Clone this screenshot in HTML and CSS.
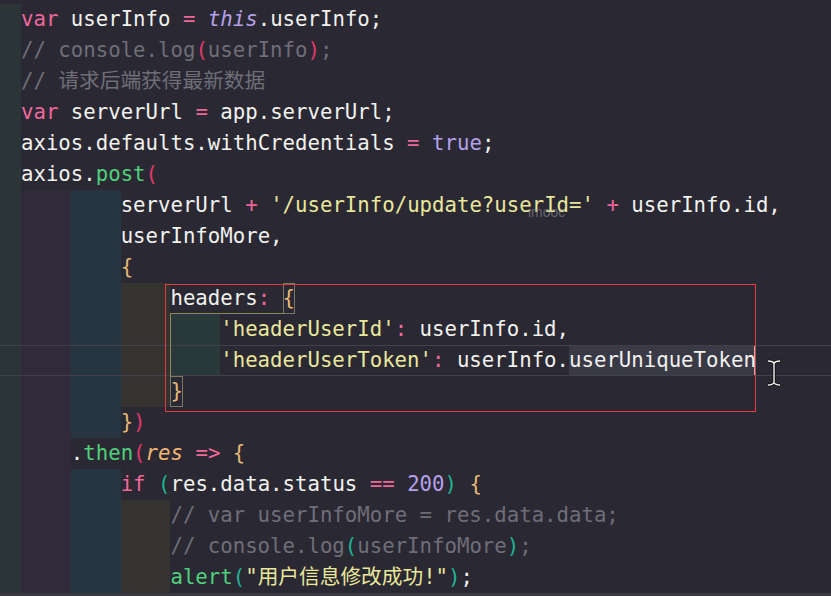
FILE: index.html
```html
<!DOCTYPE html>
<html lang="en">
<head>
  <meta charset="UTF-8">
  <title>userInfo update</title>
  <link rel="stylesheet" href="styles.css">
</head>
<body>

<div class="editor">
  <div class="line"><span class="lead"></span><span class="t"><span class="k">var</span> userInfo <span class="o">=</span> <span class="this">this</span>.userInfo;</span></div>
  <div class="line"><span class="lead"></span><span class="t"><span class="c">// console.log<span class="pr">(</span>userInfo<span class="pr">)</span>;</span></span></div>
  <div class="line"><span class="lead"></span><span class="t"><span class="c">// 请求后端获得最新数据</span></span></div>
  <div class="line"><span class="lead"></span><span class="t"><span class="k">var</span> serverUrl <span class="o">=</span> app.serverUrl;</span></div>
  <div class="line"><span class="lead"></span><span class="t">axios.defaults.withCredentials <span class="o">=</span> <span class="n">true</span>;</span></div>
  <div class="line"><span class="lead"></span><span class="t">axios.<span class="f">post</span><span class="pr">(</span></span></div>
  <div class="line"><span class="lead"></span><span class="g g1"></span><span class="g g2"></span><span class="t">serverUrl <span class="o">+</span> <span class="s">'/userInfo/update?userId='</span> <span class="o">+</span> userInfo.id,</span></div>
  <div class="line"><span class="lead"></span><span class="g g1"></span><span class="g g2"></span><span class="t">userInfoMore,</span></div>
  <div class="line"><span class="lead"></span><span class="g g1"></span><span class="g g2"></span><span class="t"><span class="br">{</span></span></div>
  <div class="line"><span class="lead"></span><span class="g g1"></span><span class="g g2"></span><span class="g g3"></span><span class="t">headers<span class="o">:</span> <span class="bx br">{</span></span></div>
  <div class="line"><span class="lead"></span><span class="g g1"></span><span class="g g2"></span><span class="g g3"></span><span class="g g4"></span><span class="t"><span class="s">'headerUserId'</span><span class="o">:</span> userInfo.id,</span></div>
  <div class="line cur"><span class="lead"></span><span class="g g1"></span><span class="g g2"></span><span class="g g3"></span><span class="g g4"></span><span class="t"><span class="s">'headerUserToken'</span><span class="o">:</span> userInfo.<span class="sel">userUniqueToken</span><span class="caret"></span></span></div>
  <div class="line"><span class="lead"></span><span class="g g1"></span><span class="g g2"></span><span class="g g3"></span><span class="t"><span class="bx br">}</span></span></div>
  <div class="line"><span class="lead"></span><span class="g g1"></span><span class="g g2"></span><span class="t"><span class="br">}</span><span class="pr">)</span></span></div>
  <div class="line"><span class="lead"></span><span class="g g1"></span><span class="t">.<span class="f">then</span><span class="pr">(</span><span class="p">res</span> <span class="o">=&gt;</span> <span class="br">{</span></span></div>
  <div class="line"><span class="lead"></span><span class="g g1"></span><span class="g g2"></span><span class="t"><span class="k">if</span> <span class="pg">(</span>res.data.status <span class="o">==</span> <span class="n">200</span><span class="pg">)</span> <span class="br">{</span></span></div>
  <div class="line"><span class="lead"></span><span class="g g1"></span><span class="g g2"></span><span class="g g3"></span><span class="t"><span class="c">// var userInfoMore = res.data.data;</span></span></div>
  <div class="line"><span class="lead"></span><span class="g g1"></span><span class="g g2"></span><span class="g g3"></span><span class="t"><span class="c">// console.log<span class="pg">(</span>userInfoMore<span class="pg">)</span>;</span></span></div>
  <div class="line"><span class="lead"></span><span class="g g1"></span><span class="g g2"></span><span class="g g3"></span><span class="t"><span class="f">alert</span><span class="pg">(</span><span class="s">"用户信息修改成功!"</span><span class="pg">)</span>;</span></div>
  <div class="line tail"></div>

  <!-- overlays -->
  <div class="guide"></div>
  <div class="redbox"></div>
  <div class="mark">imooc</div>
  <svg class="ibeam" width="16" height="28" viewBox="0 0 16 28">
    <path d="M2 2 C5 2 7 2.5 8 4.5 C9 2.5 11 2 14 2 M8 4.5 V23.5 M2 26 C5 26 7 25.5 8 23.5 C9 25.5 11 26 14 26" fill="none" stroke="#111" stroke-width="3.2"/>
    <path d="M2 2 C5 2 7 2.5 8 4.5 C9 2.5 11 2 14 2 M8 4.5 V23.5 M2 26 C5 26 7 25.5 8 23.5 C9 25.5 11 26 14 26" fill="none" stroke="#f4f4f4" stroke-width="1.4"/>
  </svg>
</div>

</body>
</html>
```

FILE: styles.css
```css
body {
  margin: 0;
  background: #2a2933;
  overflow: hidden;
}

.editor {
  position: relative;
  padding-top: 4px;
  font-family: "DejaVu Sans Mono", "Noto Sans CJK SC", monospace;
  font-size: 20.7px;
  line-height: 31px;
  color: #f1f1ee;
}

.line {
  display: flex;
  height: 31px;
  white-space: pre;
}

.lead {
  flex: none;
  width: 21px;
  background: #2b3436;
}

/* indent rainbow */
.g {
  flex: none;
  width: 4ch;
}
.g1 { background: #302a3a; }
.g2 { background: #263540; }
.g3 { background: #34332f; }
.g4 { background: #29393a; }

.cur {
  position: relative;
}

.cur::after {
  content: "";
  position: absolute;
  left: 0;
  right: 0;
  top: 0;
  bottom: 0;
  border-top: 1px solid #42414b;
  border-bottom: 1px solid #42414b;
  pointer-events: none;
}

.tail {
  background: #3a3942;
}

/* syntax */
.k, .o { color: #f0679a; }
.f { color: #50d07c; }
.s { color: #e9e79b; }
.n { color: #b6a0ea; }
.this { color: #b6a0ea; font-style: italic; }
.c { color: #6f6e78; }
.p { color: #f2b673; font-style: italic; }
.br { color: #e6b877; }
.pr { color: #e0386c; }
.pg { color: #1fb393; }

.bx {
  display: inline-block;
  box-shadow: inset 0 0 0 1px #7a7966;
}

.sel {
  display: inline-block;
  background: #3a3a47;
}

.caret {
  display: inline-block;
  width: 2px;
  height: 31px;
  margin-left: -2px;
  vertical-align: top;
  background: #b5b5b5;
}

.guide {
  position: absolute;
  left: 170px;
  top: 313px;
  width: 113px;
  height: 63px;
  border-top: 1px solid #8b8a52;
  border-left: 1px solid #8b8a52;
}

.redbox {
  position: absolute;
  left: 165px;
  top: 284px;
  width: 589px;
  height: 126px;
  border: 1px solid #e3393c;
}

.mark {
  position: absolute;
  left: 528px;
  top: 204px;
  font-family: "Liberation Sans", Arial, sans-serif;
  font-size: 14px;
  line-height: 16px;
  color: rgba(150, 150, 162, 0.55);
}

.ibeam {
  position: absolute;
  left: 766px;
  top: 359px;
}
```
